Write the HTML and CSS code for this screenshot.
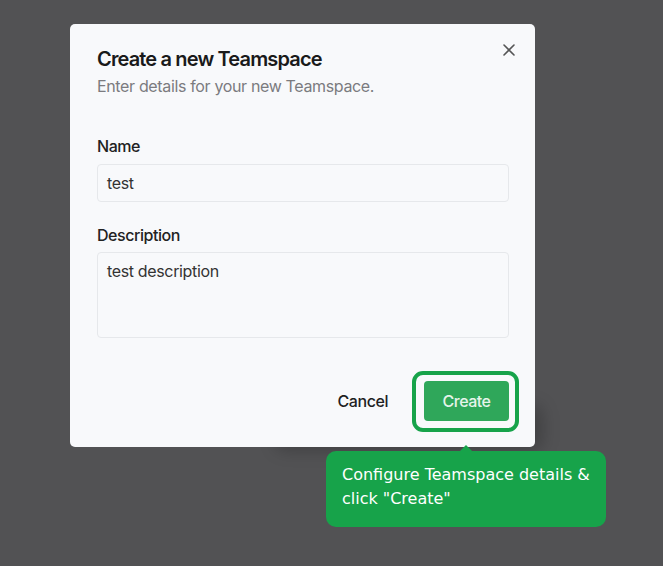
FILE: index.html
```html
<!DOCTYPE html>
<html lang="en">
<head>
<meta charset="utf-8">
<title>Create a new Teamspace</title>
<link rel="stylesheet" href="styles.css">
</head>
<body>
<div class="backdrop-shadow"></div>
<div class="modal" role="dialog">
  <button class="close" aria-label="Close">
    <svg width="12" height="12" viewBox="0 0 12 12"><path d="M1 1 L11 11 M11 1 L1 11" stroke="#555" stroke-width="1.6" stroke-linecap="round" fill="none"/></svg>
  </button>
  <h2 class="title">Create a new Teamspace</h2>
  <p class="subtitle">Enter details for your new Teamspace.</p>
  <label class="label label-first">Name</label>
  <div class="input">test</div>
  <label class="label label-gap">Description</label>
  <div class="input textarea">test description</div>
  <div class="footer">
    <button class="btn-cancel">Cancel</button>
    <div class="highlight">
      <button class="btn-create">Create</button>
      <span class="ring"></span>
    </div>
  </div>
</div>
<div class="tooltip">Configure Teamspace details &amp; click "Create"</div>
</body>
</html>
```
FILE: styles.css
```css
html, body {
  margin: 0;
  padding: 0;
}
body {
  background: #525254;
  width: 663px;
  height: 566px;
  overflow: hidden;
  position: relative;
  font-family: Inter, "Liberation Sans", sans-serif;
}
.backdrop-shadow {
  position: absolute;
  left: 275px;
  top: 405px;
  width: 268px;
  height: 46px;
  background: rgba(0, 0, 0, 0.2);
  filter: blur(8px);
  border-radius: 10px;
}
.modal {
  position: absolute;
  left: 70px;
  top: 24px;
  width: 465px;
  height: 423px;
  box-sizing: border-box;
  padding: 21px 26px 26px 27px;
  background: #f8f9fb;
  border-radius: 5px;
  display: flex;
  flex-direction: column;
}
.close {
  position: absolute;
  top: 20px;
  right: 20px;
  width: 12px;
  height: 12px;
  padding: 0;
  border: 0;
  background: none;
  display: flex;
}
.title {
  margin: 0;
  font-size: 20px;
  line-height: 28px;
  font-weight: 600;
  color: #1a1a1a;
  letter-spacing: -0.85px;
}
.subtitle {
  margin: 1px 0 0;
  font-size: 16px;
  line-height: 24px;
  color: #7b7b7f;
  letter-spacing: -0.35px;
}
.label {
  display: block;
  font-size: 16px;
  line-height: 24px;
  font-weight: 500;
  color: #222;
  letter-spacing: -0.45px;
}
.label-first { margin-top: 36px; }
.label-gap { margin-top: 21px; }
.input {
  margin-top: 6px;
  height: 38px;
  box-sizing: border-box;
  border: 1px solid #e6e8eb;
  border-radius: 4px;
  background: #f8f9fb;
  padding: 6px 9px;
  font-size: 16px;
  line-height: 24px;
  color: #333;
  letter-spacing: -0.35px;
}
.textarea {
  margin-top: 5px;
  height: 87px;
}
.footer {
  margin-top: 43px;
  display: flex;
  justify-content: flex-end;
  align-items: center;
  gap: 22px;
}
.btn-cancel {
  border: 0;
  background: none;
  font-family: inherit;
  font-size: 16px;
  font-weight: 500;
  color: #1f1f1f;
  padding: 8px 14px;
  letter-spacing: -0.45px;
}
.highlight {
  position: relative;
  display: flex;
}
.btn-create {
  width: 85px;
  height: 40px;
  border: 0;
  border-radius: 4px;
  background: #2fa75a;
  color: #e6f4ea;
  font-family: inherit;
  font-size: 16px;
  font-weight: 500;
  padding: 0;
  letter-spacing: -0.5px;
}
.ring {
  position: absolute;
  left: -12px;
  right: -10px;
  top: -10px;
  bottom: -11px;
  border: 4px solid #17a34a;
  border-radius: 11px;
}
.tooltip {
  position: absolute;
  left: 326px;
  top: 451px;
  width: 256px;
  padding: 12px 8px 16px 16px;
  background: #17a34a;
  color: #fff;
  border-radius: 10px;
  font-family: "DejaVu Sans", sans-serif;
  font-size: 16px;
  line-height: 24px;
}
.tooltip::before {
  content: "";
  position: absolute;
  left: 134px;
  top: -6px;
  border-left: 6px solid transparent;
  border-right: 6px solid transparent;
  border-bottom: 6px solid #17a34a;
}
```
